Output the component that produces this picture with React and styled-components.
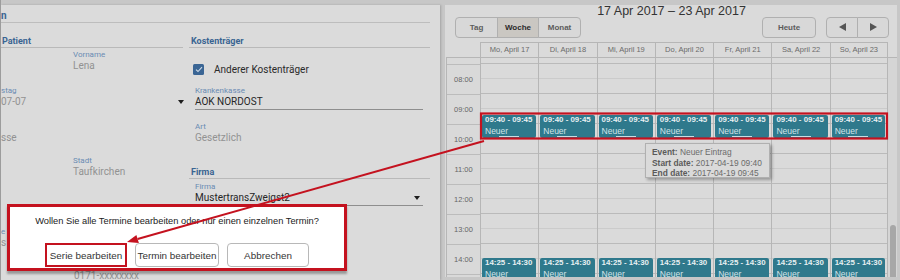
import React from "react";
import styled, { createGlobalStyle, css } from "styled-components";

const GlobalStyle = createGlobalStyle`
  html, body { margin: 0; padding: 0; background: #c6c6c6; }
  body { width: 900px; height: 280px; overflow: hidden; }
  #root { width: 900px; height: 280px; }
`;

const RED = "#c4121f";

const Frame = styled.div`
  position: relative;
  box-sizing: border-box;
  width: 900px;
  height: 280px;
  display: flex;
  gap: 5px;
  padding: 5px 3px 0 0;
  border-left: 1px solid #9c9c9c;
  background: #c7c7c7;
  overflow: hidden;
`;

/* ---------- form panel ---------- */
const FormPanel = styled.section`
  position: relative;
  flex: none;
  width: 439px;
  background: #dbdbdb;
  box-shadow: 1px 0 2px rgba(0, 0, 0, 0.18);
  font-family: Roboto, "Liberation Sans", sans-serif;
  display: flex;
  flex-direction: column;
  overflow: hidden;
`;

const FormTitle = styled.div`
  box-sizing: border-box;
  height: 18px;
  margin-right: 10px;
  padding-top: 4px;
  line-height: 13px;
  font-size: 10px;
  font-weight: 700;
  color: #3a6592;
  border-bottom: 1px solid #bdbdbd;
`;

const FormBody = styled.div`
  display: flex;
  gap: 6px;
  padding-right: 10px;
`;

const Column = styled.div`
  flex: none;
  width: ${(p) => p.$w}px;
  display: flex;
  flex-direction: column;
`;

const SectionHeading = styled.div`
  margin-top: ${(p) => p.$mt || 0}px;
  padding-top: ${(p) => p.$pt}px;
  padding-left: ${(p) => p.$pl || 0}px;
  line-height: 11px;
  font-size: 9px;
  font-weight: 700;
  color: #3a6592;
  border-bottom: 1px solid #b9b9b9;
`;

const Field = styled.div`
  display: flex;
  flex-direction: column;
  margin-top: ${(p) => p.$mt || 0}px;
  margin-left: ${(p) => p.$ml || 0}px;
  width: ${(p) => (p.$w ? `${p.$w}px` : "auto")};
`;

const FieldLabel = styled.div`
  height: 10px;
  line-height: 10px;
  font-size: 8px;
  color: #6a8bb3;
  white-space: nowrap;
`;

const FieldValue = styled.div`
  display: flex;
  align-items: center;
  justify-content: space-between;
  line-height: 11px;
  height: 11px;
  font-size: 10px;
  white-space: nowrap;
  color: ${(p) => (p.$dark ? "#262626" : "#929292")};
  ${(p) =>
    p.$underline &&
    css`
      padding-bottom: 2px;
      border-bottom: 1px solid #8e8e8e;
    `}
  padding-right: ${(p) => p.$pr || 0}px;
`;

const Caret = styled.span`
  width: 0;
  height: 0;
  margin-right: ${(p) => p.$mr || 0}px;
  border-left: 3px solid transparent;
  border-right: 3px solid transparent;
  border-top: 4px solid #1e1e1e;
`;

const CheckRow = styled.label`
  display: flex;
  align-items: center;
  height: 12px;
  margin-top: 15px;
  padding-left: 4px;
  font-size: 10px;
  color: #2a2a2a;
`;

const CheckBox = styled.span`
  display: inline-flex;
  align-items: center;
  justify-content: center;
  width: 11px;
  height: 11px;
  margin-right: 10px;
  border-radius: 1.5px;
  background: #3a6594;
`;

/* ---------- dialog ---------- */
const Dialog = styled.div`
  position: absolute;
  left: 6px;
  top: 199px;
  box-sizing: border-box;
  width: 340px;
  height: 67px;
  background: #ffffff;
  border: 3px solid ${RED};
  box-shadow: 0 3px 2px rgba(0, 0, 0, 0.3);
  font-family: "Liberation Sans", Arial, sans-serif;
  display: flex;
  flex-direction: column;
  align-items: center;
`;

const DialogText = styled.div`
  margin-top: 8px;
  line-height: 12px;
  font-size: 9.3px;
  color: #222;
  white-space: nowrap;
`;

const DialogActions = styled.div`
  display: flex;
  gap: 8px;
  margin-top: 16px;
`;

const DialogButton = styled.button`
  box-sizing: border-box;
  width: ${(p) => p.$w}px;
  height: 24px;
  padding: 0;
  background: #fff;
  border: 1px solid #b8b8b8;
  border-radius: 4px;
  font-family: "Liberation Sans", Arial, sans-serif;
  font-size: 9.9px;
  color: #333;
  white-space: nowrap;
  ${(p) =>
    p.$marked &&
    css`
      border: 2px solid ${RED};
      border-radius: 0;
    `}
`;

/* ---------- calendar panel ---------- */
const CalendarPanel = styled.section`
  position: relative;
  flex: 1;
  margin-bottom: 3px;
  padding-left: 1px;
  background: #dadada;
  display: flex;
  flex-direction: column;
  font-family: "Liberation Sans", Arial, sans-serif;
  overflow: hidden;
`;

const RangeTitle = styled.div`
  height: 12px;
  line-height: 12px;
  text-align: center;
  font-size: 12.5px;
  color: #333;
`;

const Toolbar = styled.div`
  display: flex;
  justify-content: space-between;
  padding: 0 8px 0 9px;
`;

const ToolGroup = styled.div`
  display: flex;
  gap: ${(p) => p.$gap || 0}px;
`;

const Segmented = styled.div`
  display: flex;
`;

const ToolButton = styled.button`
  box-sizing: border-box;
  width: ${(p) => p.$w}px;
  height: 21px;
  padding: 0;
  margin-left: -1px;
  border: 1px solid #b0b0b0;
  border-radius: 0;
  background: ${(p) => (p.$active ? "#cac7c2" : "#d8d8d8")};
  font-family: "Liberation Sans", Arial, sans-serif;
  font-size: 8px;
  font-weight: 700;
  color: ${(p) => (p.$active ? "#2a2a2a" : "#5c5c5c")};
  &:first-child {
    margin-left: 0;
    border-radius: 4px 0 0 4px;
  }
  &:last-child {
    border-radius: 0 4px 4px 0;
  }
  &:only-child {
    border-radius: 4px;
  }
`;

const Arrow = styled.span`
  display: inline-block;
  width: 0;
  height: 0;
  border-top: 4px solid transparent;
  border-bottom: 4px solid transparent;
  ${(p) =>
    p.$dir === "left"
      ? css`border-right: 7px solid #555;`
      : css`border-left: 7px solid #555;`}
`;

const CalendarGrid = styled.div`
  display: grid;
  grid-template-columns: 34px repeat(7, 1fr) 9px;
  grid-template-rows: 15px 220px;
  margin-top: 4px;
`;

const HeadGap = styled.div``;

const DayHead = styled.div`
  box-sizing: border-box;
  border-top: 1px solid #b6b6b6;
  border-left: 1px solid #b6b6b6;
  ${(p) => p.$last && css`border-right: 1px solid #b6b6b6;`}
  line-height: 14px;
  text-align: center;
  font-size: 7.5px;
  color: #6a6a6a;
  white-space: nowrap;
  overflow: hidden;
`;

const TimeColumn = styled.div`
  border-top: 1px solid #b6b6b6;
  border-left: 1px solid #b6b6b6;
  overflow: hidden;
  background: #d9d9d9;
`;

const TimeSlot = styled.div`
  box-sizing: border-box;
  height: ${(p) => p.$h}px;
  border-bottom: 1px solid #bcbcbc;
  display: flex;
  align-items: center;
  justify-content: center;
  font-size: 7.5px;
  color: #666;
`;

const DayColumn = styled.div`
  position: relative;
  border-top: 1px solid #b6b6b6;
  border-left: 1px solid #b6b6b6;
  ${(p) => p.$last && css`border-right: 1px solid #b6b6b6;`}
  overflow: hidden;
`;

const Slot = styled.div`
  box-sizing: border-box;
  height: ${(p) => p.$h}px;
  border-bottom: 1px solid ${(p) => (p.$minor ? "#cbcbcb" : "#bababa")};
`;

const Event = styled.div`
  position: absolute;
  left: 1px;
  right: 2px;
  box-sizing: border-box;
  height: 23px;
  padding-left: 3px;
  border-radius: 2px;
  background: #2f798c;
  overflow: hidden;
  &::after {
    content: "";
    position: absolute;
    left: 50%;
    bottom: 1px;
    width: 20px;
    margin-left: -10px;
    height: 1px;
    background: #c8dce2;
  }
`;

const EventTime = styled.div`
  line-height: 9px;
  font-size: 7.9px;
  font-weight: 700;
  color: #e8f0f2;
  white-space: nowrap;
`;

const EventTitle = styled.div`
  margin-top: 2px;
  line-height: 10px;
  font-size: 8.5px;
  color: #d3e3e8;
  white-space: nowrap;
`;

const ScrollGutter = styled.div`
  border-top: 1px solid #b6b6b6;
  background: #d5d5d5;
  overflow: hidden;
`;

const ScrollThumb = styled.div`
  width: 6px;
  height: 60px;
  margin: 167px 0 0 2px;
  border-radius: 3px;
  background: #a7a7a7;
`;

const Tooltip = styled.div`
  position: absolute;
  left: 200px;
  top: 138px;
  box-sizing: border-box;
  width: 125px;
  height: 35px;
  padding: 3px 0 0 6px;
  background: #dadada;
  border: 1px solid #b0b0b0;
  box-shadow: 2px 2px 3px rgba(0, 0, 0, 0.3);
  font-size: 8.4px;
  line-height: 10.5px;
  color: #6b6b6b;
  white-space: nowrap;
  b {
    color: #5a5a5a;
  }
`;

const Annotations = styled.svg`
  position: absolute;
  left: -1px;
  top: 0;
  pointer-events: none;
`;

/* ---------- data ---------- */
const days = [
  "Mo, April 17",
  "Di, April 18",
  "Mi, April 19",
  "Do, April 20",
  "Fr, April 21",
  "Sa, April 22",
  "So, April 23",
];
const hours = ["08:00", "09:00", "10:00", "11:00", "12:00", "13:00", "14:00"];
const events = [
  { start: "09:40", end: "09:45" },
  { start: "14:25", end: "14:30" },
];
const topFor = (t) => {
  const [h, m] = t.split(":").map(Number);
  return 7 + (h - 8) * 30 + m / 2;
};

const Check = () => (
  <svg width="8" height="7" viewBox="0 0 8 7">
    <path d="M1 3.6 L3 5.5 L7 1.2" fill="none" stroke="#cfdbe8" strokeWidth="1.1" />
  </svg>
);

export default function App() {
  return (
    <>
      <GlobalStyle />
      <Frame>
        <FormPanel>
          <FormTitle>n</FormTitle>
          <FormBody>
            <Column $w={182}>
              <SectionHeading $pt={13} $pl={1}>Patient</SectionHeading>
              <Field $mt={2} $ml={72}>
                <FieldLabel>Vorname</FieldLabel>
                <FieldValue>Lena</FieldValue>
              </Field>
              <Field $mt={15}>
                <FieldLabel>stag</FieldLabel>
                <FieldValue>
                  07-07
                  <Caret $mr={-1} />
                </FieldValue>
              </Field>
              <Field $mt={15}>
                <FieldLabel>&nbsp;</FieldLabel>
                <FieldValue>sse</FieldValue>
              </Field>
              <Field $mt={13} $ml={72}>
                <FieldLabel>Stadt</FieldLabel>
                <FieldValue>Taufkirchen</FieldValue>
              </Field>
              <Field $mt={50}>
                <FieldLabel>e</FieldLabel>
                <FieldValue>s</FieldValue>
              </Field>
              <Field $mt={12} $ml={73}>
                <FieldLabel>Telefon</FieldLabel>
                <FieldValue>0171-xxxxxxxx</FieldValue>
              </Field>
            </Column>
            <Column $w={241}>
              <SectionHeading $pt={13} $pl={2}>Kostenträger</SectionHeading>
              <CheckRow>
                <CheckBox>
                  <Check />
                </CheckBox>
                Anderer Kostenträger
              </CheckRow>
              <Field $mt={11} $ml={6} $w={228}>
                <FieldLabel>Krankenkasse</FieldLabel>
                <FieldValue $dark $underline>AOK NORDOST</FieldValue>
              </Field>
              <Field $mt={12} $ml={6}>
                <FieldLabel>Art</FieldLabel>
                <FieldValue>Gesetzlich</FieldValue>
              </Field>
              <SectionHeading $pt={24} $pl={2}>Firma</SectionHeading>
              <Field $mt={3} $ml={6} $w={228}>
                <FieldLabel>Firma</FieldLabel>
                <FieldValue $dark $underline $pr={3}>
                  MustertransZweigst2
                  <Caret />
                </FieldValue>
              </Field>
            </Column>
          </FormBody>

          <Dialog>
            <DialogText>Wollen Sie alle Termine bearbeiten oder nur einen einzelnen Termin?</DialogText>
            <DialogActions>
              <DialogButton $w={82} $marked>Serie bearbeiten</DialogButton>
              <DialogButton $w={84}>Termin bearbeiten</DialogButton>
              <DialogButton $w={82}>Abbrechen</DialogButton>
            </DialogActions>
          </Dialog>
        </FormPanel>

        <CalendarPanel>
          <RangeTitle>17 Apr 2017 – 23 Apr 2017</RangeTitle>
          <Toolbar>
            <Segmented>
              <ToolButton $w={43}>Tag</ToolButton>
              <ToolButton $w={42} $active>Woche</ToolButton>
              <ToolButton $w={43}>Monat</ToolButton>
            </Segmented>
            <ToolGroup $gap={10}>
              <Segmented>
                <ToolButton $w={54}>Heute</ToolButton>
              </Segmented>
              <Segmented>
                <ToolButton $w={32}>
                  <Arrow $dir="left" />
                </ToolButton>
                <ToolButton $w={32}>
                  <Arrow $dir="right" />
                </ToolButton>
              </Segmented>
            </ToolGroup>
          </Toolbar>

          <CalendarGrid>
            <HeadGap />
            {days.map((d, i) => (
              <DayHead key={d} $last={i === days.length - 1}>
                {d}
              </DayHead>
            ))}
            <HeadGap />

            <TimeColumn>
              <TimeSlot $h={7} />
              {hours.map((h) => (
                <TimeSlot key={h} $h={30}>
                  {h}
                </TimeSlot>
              ))}
              <TimeSlot $h={30} />
            </TimeColumn>
            {days.map((d, i) => (
              <DayColumn key={d} $last={i === days.length - 1}>
                <Slot $h={6} />
                {[...hours, "15:00"].map((h) => (
                  <React.Fragment key={h}>
                    <Slot $h={15} $minor />
                    <Slot $h={15} />
                  </React.Fragment>
                ))}
                {events.map((ev) => (
                  <Event key={ev.start} style={{ top: `${topFor(ev.start)}px` }}>
                    <EventTime>
                      {ev.start} - {ev.end}
                    </EventTime>
                    <EventTitle>Neuer</EventTitle>
                  </Event>
                ))}
              </DayColumn>
            ))}
            <ScrollGutter>
              <ScrollThumb />
            </ScrollGutter>
          </CalendarGrid>

          <Tooltip>
            <b>Event:</b> Neuer Eintrag
            <br />
            <b>Start date:</b> 2017-04-19 09:40
            <br />
            <b>End date:</b> 2017-04-19 09:45
          </Tooltip>
        </CalendarPanel>

        <Annotations width="900" height="280" viewBox="0 0 900 280">
          <rect x="481" y="113.5" width="406" height="25" fill="none" stroke={RED} strokeWidth="2.2" />
          <line x1="484" y1="141" x2="137.6" y2="239" stroke={RED} strokeWidth="2" />
          <polygon points="127,242 138.9,243 136.4,235" fill={RED} />
        </Annotations>
      </Frame>
    </>
  );
}
